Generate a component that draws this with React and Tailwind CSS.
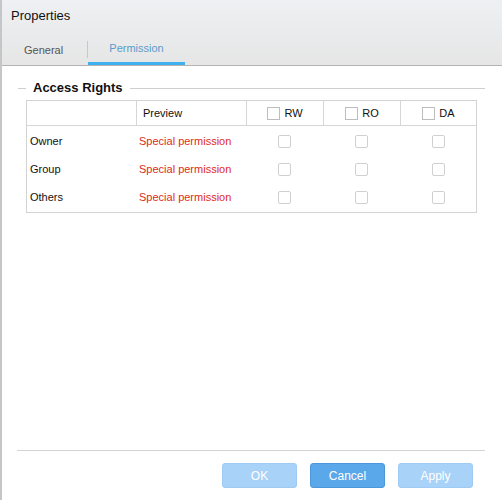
import React from 'react';

const font = { fontFamily: '"Liberation Sans", Arial, sans-serif' };

function Box() {
  return <span className="inline-block w-[13px] h-[13px] rounded-[2px] border border-[#d0d0d0] bg-white" />;
}

function HeadCell({ label }) {
  return (
    <div className="flex items-center justify-center gap-[4px] border-l border-[#d6d6d6] text-[11px] text-[#111]">
      <span className="inline-block w-[13px] h-[13px] border border-[#bdbdbd] bg-white" />
      {label}
    </div>
  );
}

const rows = ['Owner', 'Group', 'Others'];

export default function App() {
  return (
    <div style={font} className="w-[502px] h-[500px] flex flex-col bg-white border-l-2 border-[#c4c6ca] overflow-hidden">
      {/* Header */}
      <div className="h-[66px] flex flex-col bg-gradient-to-b from-[#eef0f3] to-[#e6e6e6] border-b border-[#b3b3b3]">
        <div className="pl-[9px] pt-[8px] text-[13px] text-[#111] leading-[16px]">Properties</div>
        <div className="flex items-end mt-auto h-[26px]">
          <div className="w-[85px] pl-[22px] pb-[7px] text-[11px] text-[#555]">General</div>
          <div className="w-px h-[17px] bg-[#c8c8c8] mb-[7px]" />
          <div className="w-[97px] text-center pb-[6px] border-b-[3px] border-[#3eb1ee] text-[11px] text-[#5a9cc8]">
            Permission
          </div>
        </div>
      </div>

      {/* Content */}
      <div className="flex-1 flex flex-col pl-[14px] pr-[17px]">
        <div className="flex items-center mt-[15px] h-[14px]">
          <div className="ml-[2px] w-[8px] h-px bg-[#cfcfcf]" />
          <div className="px-[7px] text-[13px] font-bold text-[#111]">Access Rights</div>
          <div className="flex-1 h-px bg-[#cfcfcf]" />
        </div>

        <div className="ml-[10px] w-[451px] mt-[5px] border border-[#d3d3d3]">
          <div className="grid grid-cols-[109px_110px_77px_77px_1fr] h-[25px] border-b border-[#d6d6d6]">
            <div />
            <div className="flex items-center pl-[6px] border-l border-[#d6d6d6] text-[11px] text-[#111]">Preview</div>
            <HeadCell label="RW" />
            <HeadCell label="RO" />
            <HeadCell label="DA" />
          </div>
          <div className="pt-[1px] pb-[1px]">
            {rows.map((r) => (
              <div key={r} className="grid grid-cols-[109px_110px_77px_77px_1fr] h-[28px] items-center text-[11px]">
                <div className="pl-[3px] text-[#111]">{r}</div>
                <div className="pl-[3px] text-[#e02b20]">Special permission</div>
                <div className="flex justify-center"><Box /></div>
                <div className="flex justify-center"><Box /></div>
                <div className="flex justify-center"><Box /></div>
              </div>
            ))}
          </div>
        </div>

        <div className="flex-1" />
        <div className="h-px bg-[#d3d3d3] ml-[1px]" />
        <div className="flex justify-end gap-[13px] pt-[12px] pb-[12px] pr-[12px]">
          <button className="w-[75px] h-[25px] rounded-[3px] bg-[#a9d2f8] border border-[#9fcaf4] text-[12px] text-white">OK</button>
          <button className="w-[75px] h-[25px] rounded-[3px] bg-[#5aa7ea] border border-[#4b97dc] text-[12px] text-white">Cancel</button>
          <button className="w-[75px] h-[25px] rounded-[3px] bg-[#a9d2f8] border border-[#9fcaf4] text-[12px] text-white">Apply</button>
        </div>
      </div>
    </div>
  );
}
